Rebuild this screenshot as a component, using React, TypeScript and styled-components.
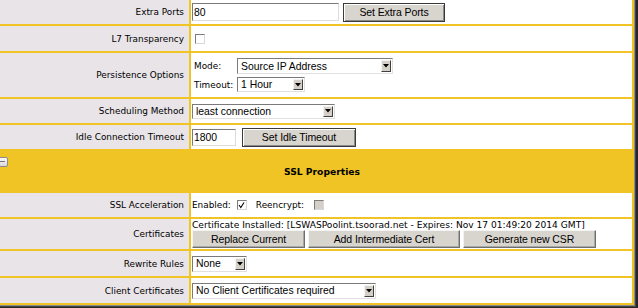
import React from 'react';
import styled, { createGlobalStyle } from 'styled-components';

const GlobalStyle = createGlobalStyle`
  * { box-sizing: border-box; }
  html, body { margin: 0; padding: 0; }
  body {
    width: 638px;
    height: 308px;
    overflow: hidden;
    background: #262626;
    font-family: 'DejaVu Sans', Verdana, sans-serif;
    color: #000;
  }
`;

const Frame = styled.div`
  display: grid;
  grid-template-columns: 189px 441px;
  gap: 2px;
  padding: 2px;
  width: max-content;
  margin: -2px 0 0 -2px;
  background: #efc424;
  box-shadow: 1px 1px 0 #8a8a8a, 2px 2px 0 #444;
`;

const Label = styled.div<{ $h: number }>`
  height: ${p => p.$h}px;
  background: #e8e4e8;
  display: flex;
  align-items: center;
  justify-content: flex-end;
  padding-right: 5px;
  font-size: 8.9px;
  white-space: nowrap;
`;

const Value = styled.div<{ $h: number; $gap: number }>`
  height: ${p => p.$h}px;
  background: #fff;
  display: flex;
  align-items: center;
  gap: ${p => p.$gap}px;
  padding-left: 1px;
  font-size: 8.9px;
  white-space: nowrap;
`;

const Header = styled.div`
  grid-column: 1 / -1;
  height: 40px;
  position: relative;
  display: flex;
  align-items: center;
  justify-content: center;
  padding-left: 12px;
  font-size: 9.2px;
  font-weight: bold;
`;

const Collapse = styled.span`
  position: absolute;
  left: -4px;
  top: 6px;
  width: 12px;
  height: 10px;
  border: 1px solid #8c8c8c;
  border-radius: 2px;
  background: linear-gradient(#fafafa, #d8d8d8);

  &::after {
    content: '';
    position: absolute;
    left: 1px;
    right: 2px;
    top: 3px;
    height: 1px;
    background: #777;
  }
`;

const TextInput = styled.input<{ $w: number; $h: number }>`
  width: ${p => p.$w}px;
  height: ${p => p.$h}px;
  margin: 0;
  padding: 0 1px;
  border: 1px solid;
  border-color: #7a7a7a #dcdcdc #dcdcdc #7a7a7a;
  background: #fff;
  font-family: 'Liberation Sans', Arial, sans-serif;
  font-size: 10.4px;
  color: #000;
  outline: none;
`;

const Button = styled.button<{ $w: number; $h: number; $strong?: boolean }>`
  width: ${p => p.$w}px;
  height: ${p => p.$h}px;
  margin: 0;
  padding: 0;
  background: #d8d4ce;
  font-family: 'Liberation Sans', Arial, sans-serif;
  font-size: 10.5px;
  color: #000;
  letter-spacing: -0.1px;
  border: 1px solid;
  border-color: ${p => (p.$strong ? '#3a3a3a' : '#f4f4f4 #6e6e6e #6e6e6e #f4f4f4')};
  box-shadow: ${p =>
    p.$strong ? 'inset 1px 1px #fff, inset -1px -1px #8a8a8a' : 'inset -1px -1px #a8a8a8'};
`;

const SelectBox = styled.div<{ $w: number; $h: number }>`
  width: ${p => p.$w}px;
  height: ${p => p.$h}px;
  display: flex;
  align-items: stretch;
  border: 1px solid;
  border-color: #7a7a7a #e0e0e0 #e0e0e0 #7a7a7a;
  background: #fff;
  font-family: 'Liberation Sans', Arial, sans-serif;
  font-size: 10.4px;
`;

const SelectText = styled.span`
  flex: 1;
  display: flex;
  align-items: center;
  padding-left: 3px;
  overflow: hidden;
  white-space: nowrap;
`;

const SelectArrow = styled.span`
  width: 10px;
  margin: 1px;
  display: flex;
  align-items: center;
  justify-content: center;
  background: #d4d0c8;
  border: 1px solid;
  border-color: #f2f2f2 #404040 #404040 #f2f2f2;
`;

const Check = styled.span<{ $disabled?: boolean; $ml?: number }>`
  display: inline-flex;
  align-items: center;
  justify-content: center;
  flex: none;
  width: 10px;
  height: 10px;
  margin-left: ${p => p.$ml ?? 0}px;
  border: 1px solid;
  border-color: #7c7c7c #d8d8d8 #d8d8d8 #7c7c7c;
  background: ${p => (p.$disabled ? '#d4d0c8' : '#fff')};
`;

const Text = styled.span<{ $ml?: number }>`
  margin-left: ${p => p.$ml ?? 0}px;
`;

const Nested = styled.div`
  display: grid;
  grid-template-columns: 43px auto;
  row-gap: 3px;
  align-items: center;
  padding-left: 2px;
`;

const CertStack = styled.div`
  display: flex;
  flex-direction: column;
  align-items: flex-start;
`;

const CertText = styled.span`
  font-size: 9.1px;
`;

const ButtonRow = styled.div`
  display: flex;
  gap: 3px;
`;

const Select = ({ w, h, value }: { w: number; h: number; value: string }) => (
  <SelectBox $w={w} $h={h}>
    <SelectText>{value}</SelectText>
    <SelectArrow>
      <svg width="6" height="4" viewBox="0 0 6 4">
        <polygon points="0,0 6,0 3,3.5" fill="#000" />
      </svg>
    </SelectArrow>
  </SelectBox>
);

const Tick = () => (
  <svg width="7" height="7" viewBox="0 0 7 7">
    <polyline points="1,3 2.8,5.5 6,0.5" fill="none" stroke="#000" strokeWidth="1.1" />
  </svg>
);

const Field = ({
  label,
  h,
  gap = 0,
  children,
}: {
  label: string;
  h: number;
  gap?: number;
  children?: React.ReactNode;
}) => (
  <>
    <Label $h={h}>{label}</Label>
    <Value $h={h} $gap={gap}>
      {children}
    </Value>
  </>
);

export default function App() {
  return (
    <>
      <GlobalStyle />
      <Frame>
        <Field label="Extra Ports" h={24} gap={4}>
          <TextInput $w={147} $h={18} defaultValue="80" readOnly />
          <Button $w={102} $h={19} $strong>
            Set Extra Ports
          </Button>
        </Field>

        <Field label="L7 Transparency" h={25}>
          <Check $ml={3} />
        </Field>

        <Field label="Persistence Options" h={44}>
          <Nested>
            <span>Mode:</span>
            <Select w={156} h={16} value="Source IP Address" />
            <span>Timeout:</span>
            <Select w={68} h={15} value="1 Hour" />
          </Nested>
        </Field>

        <Field label="Scheduling Method" h={24}>
          <Select w={143} h={15} value="least connection" />
        </Field>

        <Field label="Idle Connection Timeout" h={24} gap={6}>
          <TextInput $w={44} $h={17} defaultValue="1800" readOnly />
          <Button $w={114} $h={19} $strong>
            Set Idle Timeout
          </Button>
        </Field>

        <Header>
          <Collapse />
          SSL Properties
        </Header>

        <Field label="SSL Acceleration" h={24}>
          <Text>Enabled:</Text>
          <Check $ml={6}>
            <Tick />
          </Check>
          <Text $ml={9}>Reencrypt:</Text>
          <Check $ml={10} $disabled />
        </Field>

        <Field label="Certificates" h={30}>
          <CertStack>
            <CertText>
              Certificate Installed: [LSWASPoolint.tsoorad.net - Expires: Nov 17 01:49:20 2014 GMT]
            </CertText>
            <ButtonRow>
              <Button $w={113} $h={18}>Replace Current</Button>
              <Button $w={152} $h={18}>Add Intermediate Cert</Button>
              <Button $w={133} $h={18}>Generate new CSR</Button>
            </ButtonRow>
          </CertStack>
        </Field>

        <Field label="Rewrite Rules" h={25}>
          <Select w={55} h={16} value="None" />
        </Field>

        <Field label="Client Certificates" h={25}>
          <Select w={184} h={16} value="No Client Certificates required" />
        </Field>
      </Frame>
    </>
  );
}
